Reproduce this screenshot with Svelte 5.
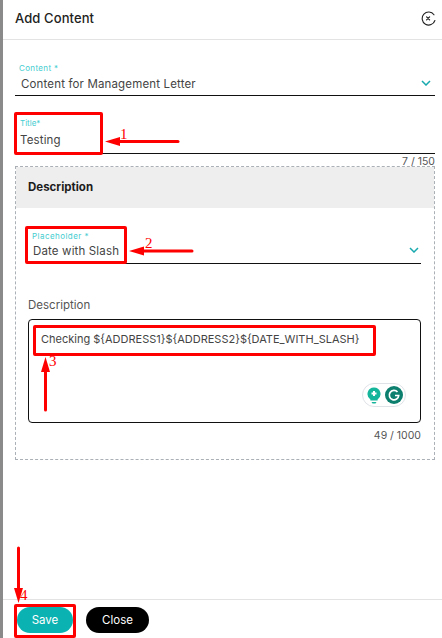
<script>
  let content = 'Content for Management Letter'
  let title = 'Testing'
  let placeholder = 'Date with Slash'
  let body = 'Checking ${ADDRESS1}${ADDRESS2}${DATE_WITH_SLASH}'

  const marks = [
    { cls: 'box-title' },
    { cls: 'box-placeholder' },
    { cls: 'box-body' },
    { cls: 'box-save' },
  ]
  const arrows = [
    { line: 'M178 141.5H118', head: '105,141.5 120,137 120,146' },
    { line: 'M192 251H142', head: '129,251 144,246.500 144,255.500' },
    { line: 'M45.500 410V370', head: '45.500,357 41,372 50,372' },
    { line: 'M18.500 548V590', head: '18.500,603 14,588 23,588' },
  ]
  const numbers = [
    { n: 1, cls: 'n1' },
    { n: 2, cls: 'n2' },
    { n: 3, cls: 'n3' },
    { n: 4, cls: 'n4' },
  ]
</script>

<div class="page">
  <div class="strip"></div>

  <div class="panel">
    <header>
      <h1>Add Content</h1>
      <button class="close-x" aria-label="Close">
        <svg width="15" height="15" viewBox="0 0 15 15" fill="none">
          <path d="M13.900 9.500A6.500 6.500 0 1 1 13 3.800" stroke="#222" stroke-width="1.100" stroke-linecap="round"/>
          <path d="M5.600 5.800l3 3M8.600 5.800l-3 3" stroke="#222" stroke-width="1.200" stroke-linecap="round"/>
        </svg>
      </button>
    </header>

    <main>
      <div class="field first">
        <span class="label">Content *</span>
        <div class="value">
          <span>{content}</span>
          <svg class="chev" width="10" height="6" viewBox="0 0 10 6" fill="none"><path d="M1 1l4 4 4-4" stroke="#17a9ae" stroke-width="1.500"/></svg>
        </div>
      </div>

      <div class="field title-field">
        <span class="label tight">Title*</span>
        <div class="value"><span>{title}</span></div>
      </div>
      <div class="count">7 / 150</div>

      <section>
        <h2>Description</h2>
        <div class="inner">
          <div class="field">
            <span class="label">Placeholder *</span>
            <div class="value">
              <span>{placeholder}</span>
              <svg class="chev" width="10" height="6" viewBox="0 0 10 6" fill="none"><path d="M1 1l4 4 4-4" stroke="#17a9ae" stroke-width="1.500"/></svg>
            </div>
          </div>

          <div class="desc-label">Description</div>
          <div class="editor">
            <p>{body}</p>
            <div class="grammarly">
              <svg width="14" height="17" viewBox="0 0 14 17">
                <path d="M7 0.500a6.500 6.500 0 0 1 3.600 11.900V13.500H3.400V12.400A6.500 6.500 0 0 1 7 0.500z" fill="#15b59b"/>
                <path d="M7 4v5M4.500 6.500h5" stroke="#fff" stroke-width="2"/>
                <path d="M4.500 15h5l-1 1.500h-3z" fill="#15b59b"/>
              </svg>
              <svg width="18" height="18" viewBox="0 0 18 18">
                <circle cx="9" cy="9" r="9" fill="#0d7f6e"/>
                <path d="M12.500 6A4.700 4.700 0 1 0 13.700 9.500H10" fill="none" stroke="#fff" stroke-width="1.700"/>
              </svg>
            </div>
          </div>
          <div class="count inner-count">49 / 1000</div>
        </div>
      </section>
    </main>

    <footer>
      <button class="save">Save</button>
      <button class="close">Close</button>
    </footer>
  </div>

  {#each marks as m}
    <div class="mark {m.cls}"></div>
  {/each}
  <svg class="arrows" width="442" height="638" viewBox="0 0 442 638">
    {#each arrows as a}
      <path d={a.line} stroke="#f00" stroke-width="3" fill="none" stroke-linecap="round"/>
      <polygon points={a.head} fill="#f00"/>
    {/each}
  </svg>
  {#each numbers as x}
    <span class="num {x.cls}">{x.n}</span>
  {/each}
</div>

<style>
  :global(body) {
    margin: 0;
    background: #fff;
  }

  .page {
    position: relative;
    display: flex;
    width: 442px;
    height: 638px;
    overflow: hidden;
    font-family: Inter, "Open Sans", sans-serif;
    color: #444;
  }

  .strip {
    flex: 0 0 3px;
    background: #8a8a8a;
  }

  .panel {
    flex: 1;
    display: flex;
    flex-direction: column;
    min-width: 0;
  }

  header {
    display: flex;
    align-items: center;
    justify-content: space-between;
    height: 36px;
    padding: 0 6px 3px 12px;
    border-bottom: 1px solid #e3e3e3;
    box-sizing: content-box;
  }

  h1 {
    margin: 0;
    font-size: 13px;
    font-weight: 500;
    color: #222;
    letter-spacing: 0.1px;
  }

  .close-x {
    display: flex;
    padding: 0;
    border: 0;
    background: none;
  }

  main {
    flex: 1;
    padding: 23px 7px 0 12px;
  }

  .field {
    display: flex;
    flex-direction: column;
    box-sizing: border-box;
    border-bottom: 1px solid #111;
  }

  .first {
    height: 33px;
  }

  .first .value {
    padding-top: 1px;
  }

  .title-field {
    height: 37px;
    margin-top: 21px;
    padding-top: 1px;
  }

  .title-field .value {
    padding-top: 2px;
    padding-left: 5px;
  }

  .label {
    padding-left: 4px;
    font-size: 8px;
    line-height: 11px;
    letter-spacing: 0.35px;
    color: #45cdd0;
  }

  .label.tight {
    padding-left: 5px;
    letter-spacing: 0;
  }

  .value {
    display: flex;
    align-items: center;
    justify-content: space-between;
    padding: 0 4px 0 6px;
    font-size: 11.500px;
    line-height: 18px;
    letter-spacing: 0.15px;
    color: #444;
  }

  .chev {
    margin-top: -3px;
  }

  .count {
    height: 12px;
    font-size: 10.500px;
    line-height: 15px;
    text-align: right;
    color: #555;
  }

  section {
    height: 294px;
    box-sizing: border-box;
    border: 1px dashed #aab0b5;
  }

  h2 {
    margin: 0;
    height: 41px;
    padding-left: 12px;
    font-size: 11.500px;
    font-weight: 700;
    line-height: 41px;
    color: #1c1c1c;
    background: #eee;
  }

  .inner {
    padding: 20px 13px 0 12px;
  }

  .inner .field {
    height: 36px;
    padding-top: 3px;
  }

  .inner .value {
    padding-left: 5px;
    padding-right: 2px;
  }

  .inner .label {
    letter-spacing: 0.45px;
  }

  .desc-label {
    margin-top: 32px;
    font-size: 11.500px;
    line-height: 18px;
    color: #555;
  }

  .editor {
    position: relative;
    height: 104px;
    margin-top: 5px;
    box-sizing: border-box;
    border: 1px solid #111;
    border-radius: 4px;
  }

  .editor p {
    margin: 0;
    padding: 11px 12px;
    font-size: 11px;
    line-height: 17px;
    color: #444;
  }

  .grammarly {
    position: absolute;
    right: 14px;
    top: 63px;
    display: flex;
    align-items: center;
    gap: 4px;
    height: 22px;
    padding: 0 2px 0 4px;
    border: 1px solid #dfe3e8;
    border-radius: 12px;
    background: #fff;
  }

  .inner-count {
    margin-top: 5px;
    font-size: 10.500px;
  }

  footer {
    display: flex;
    align-items: center;
    gap: 13px;
    height: 38px;
    padding: 0 0 0 14px;
    border-top: 1px solid #e3e3e3;
  }

  footer button {
    height: 26px;
    margin-top: 1px;
    padding: 0;
    border: 0;
    border-radius: 13px;
    font-family: inherit;
    font-size: 11.500px;
    color: #fff;
  }

  .save {
    width: 56px;
    background: #0bb2b2;
  }

  .close {
    width: 63px;
    background: #000;
  }

  .mark {
    position: absolute;
    box-sizing: border-box;
    border: 3px solid #f00;
    border-radius: 2px;
  }

  .box-title { left: 14px; top: 112px; width: 89px; height: 43px; }
  .box-placeholder { left: 25px; top: 226px; width: 102px; height: 38px; }
  .box-body { left: 33px; top: 325px; width: 343px; height: 31px; }
  .box-save { left: 14px; top: 604px; width: 62px; height: 34px; }

  .arrows {
    position: absolute;
    left: 0;
    top: 0;
    pointer-events: none;
  }

  .num {
    position: absolute;
    font-family: "Liberation Serif", serif;
    font-size: 15px;
    line-height: 15px;
    color: #f00;
  }

  .n1 { left: 120px; top: 127px; }
  .n2 { left: 145px; top: 236px; }
  .n3 { left: 49px; top: 354px; }
  .n4 { left: 20px; top: 588px; }
</style>
